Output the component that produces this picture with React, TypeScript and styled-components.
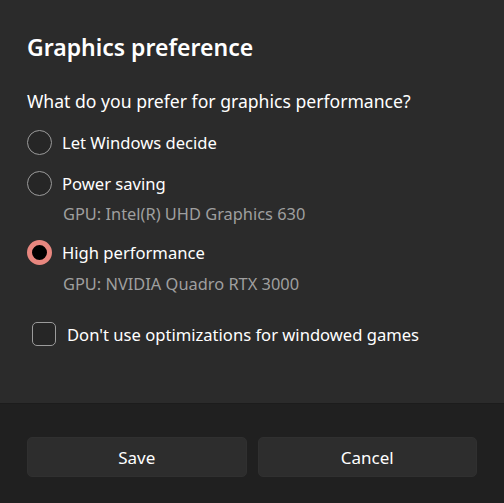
import React, { useState } from 'react';
import styled, { createGlobalStyle } from 'styled-components';

const GlobalStyle = createGlobalStyle`
  html, body {
    margin: 0;
    padding: 0;
    background: #202020;
  }
  body {
    font-family: 'Noto Sans', 'Open Sans', sans-serif;
    color: #ffffff;
    -webkit-font-smoothing: antialiased;
  }
`;

const Dialog = styled.div`
  width: 504px;
  height: 503px;
  display: flex;
  flex-direction: column;
  background: #202020;
`;

const Body = styled.div`
  height: 404px;
  box-sizing: border-box;
  padding: 31px 27px 0;
  background: #2b2b2b;
  border-bottom: 1px solid #1c1c1c;
  display: flex;
  flex-direction: column;
`;

const Title = styled.h1`
  margin: 0;
  font-size: 23px;
  line-height: 32px;
  font-weight: 600;
`;

const Question = styled.p`
  margin: 26px 0 16px;
  font-size: 17.6px;
  line-height: 24px;
`;

const Options = styled.div`
  display: flex;
  flex-direction: column;
`;

const Option = styled.label<{ $gap: number }>`
  display: flex;
  flex-direction: column;
  margin-top: ${(p) => p.$gap}px;
  cursor: pointer;
`;

const OptionRow = styled.div`
  display: flex;
  align-items: center;
  height: 26px;
  gap: 10px;
  font-size: 16.6px;
`;

const Radio = styled.span<{ $checked: boolean }>`
  box-sizing: border-box;
  width: 25px;
  height: 25px;
  border-radius: 50%;
  flex-shrink: 0;
  border: ${(p) => (p.$checked ? '5.5px solid #e8877f' : '1.5px solid #9b9b9b')};
  background: ${(p) => (p.$checked ? '#000000' : '#262626')};
`;

const SubText = styled.span<{ $top: number }>`
  margin: ${(p) => p.$top}px 0 0 36px;
  font-size: 16.4px;
  line-height: 24px;
  color: #9f9f9f;
`;

const CheckRow = styled.label`
  display: flex;
  align-items: center;
  gap: 11px;
  height: 26px;
  margin: 25px 0 0 5px;
  font-size: 16.6px;
  cursor: pointer;
`;

const CheckBox = styled.span`
  box-sizing: border-box;
  width: 24px;
  height: 24px;
  border-radius: 5px;
  border: 1.5px solid #9b9b9b;
  background: #262626;
`;

const Footer = styled.div`
  flex: 1;
  display: flex;
  gap: 11px;
  padding: 33px 27px 0;
`;

const Button = styled.button`
  flex: 1;
  height: 40px;
  border: 1px solid #303030;
  border-radius: 5px;
  background: #2d2d2d;
  color: #ffffff;
  font-family: inherit;
  font-size: 17px;
`;

const options = [
  { id: 'auto', label: 'Let Windows decide', gap: 0 },
  { id: 'saving', label: 'Power saving', gpu: 'GPU: Intel(R) UHD Graphics 630', gap: 15, subTop: 6 },
  { id: 'high', label: 'High performance', gpu: 'GPU: NVIDIA Quadro RTX 3000', gap: 13, subTop: 7 },
];

const App: React.FC = () => {
  const [choice, setChoice] = useState('high');

  return (
    <Dialog>
      <GlobalStyle />
      <Body>
        <Title>Graphics preference</Title>
        <Question>What do you prefer for graphics performance?</Question>
        <Options>
          {options.map((o) => (
            <Option key={o.id} $gap={o.gap} onClick={() => setChoice(o.id)}>
              <OptionRow>
                <Radio $checked={choice === o.id} />
                {o.label}
              </OptionRow>
              {o.gpu && <SubText $top={o.subTop ?? 0}>{o.gpu}</SubText>}
            </Option>
          ))}
        </Options>
        <CheckRow>
          <CheckBox />
          Don't use optimizations for windowed games
        </CheckRow>
      </Body>
      <Footer>
        <Button>Save</Button>
        <Button>Cancel</Button>
      </Footer>
    </Dialog>
  );
};

export default App;
